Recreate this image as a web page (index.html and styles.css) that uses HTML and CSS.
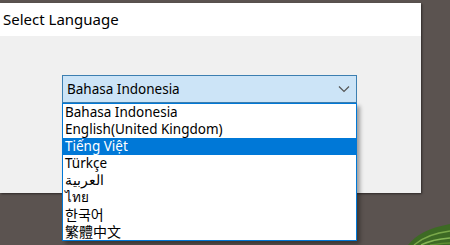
FILE: index.html
```html
<!DOCTYPE html>
<html lang="en">
<head>
    <meta charset="UTF-8">
    <meta name="viewport" content="width=device-width, initial-scale=1.0">
    <title>Select Language</title>
    <link rel="stylesheet" href="styles.css">
</head>
<body>

<div class="desktop">
    <div class="dialog">
        <div class="title-bar">Select Language</div>

        <div class="dialog-body">
            <!-- Language combo box, opened -->
            <div class="combo">
                <div class="combo-value">
                    <span>Bahasa Indonesia</span>
                    <svg class="chevron" width="12" height="8" viewBox="0 0 12 8">
                        <path d="M1 1.5 L6 6.5 L11 1.5" fill="none" stroke="#555" stroke-width="1.2"/>
                    </svg>
                </div>
                <ul class="combo-list">
                    <li>Bahasa Indonesia</li>
                    <li>English(United Kingdom)</li>
                    <li class="selected">Tiếng Việt</li>
                    <li>Türkçe</li>
                    <li lang="ar">العربية</li>
                    <li lang="th">ไทย</li>
                    <li lang="ko" class="cjk-kr">한국어</li>
                    <li lang="zh-Hant" class="cjk-tc">繁體中文</li>
                </ul>
            </div>
        </div>
    </div>

    <!-- plant in the corner of the wallpaper -->
    <svg class="plant" width="46" height="24" viewBox="0 0 46 24">
        <path d="M4 24 C12 14 24 7 46 3 L46 24 Z" fill="#3d6a24"/>
        <path d="M10 24 C18 17 30 12 46 10" fill="none" stroke="#7aa84a" stroke-width="1.4"/>
        <path d="M17 24 C25 20 35 18 46 17" fill="none" stroke="#86b556" stroke-width="1.4"/>
        <path d="M26 24 C33 23 40 22 46 22" fill="none" stroke="#5f8f34" stroke-width="1.4"/>
    </svg>
</div>

</body>
</html>
```

FILE: styles.css
```css
body { margin: 0; background-color: #5b5350; font-family: "Noto Sans", "Open Sans", sans-serif; overflow: hidden; }
.desktop { position: relative; width: 450px; height: 245px; padding-top: 3px; box-sizing: border-box; }
.dialog { width: 421px; height: 190px; background-color: #f0f0f0; box-shadow: 1px 1px 2px rgba(0, 0, 0, 0.5); }
.title-bar { height: 33px; background-color: white; color: #000; font-size: 15px; line-height: 33px; padding-left: 3px; }
.dialog-body { padding: 39px 0 0 62px; }
.combo { position: relative; width: 295px; font-size: 13.5px; color: #000; }
.combo-value { height: 26px; border: 1px solid #3c7fb1; background-color: #cce4f7; display: flex; align-items: center; justify-content: space-between; padding: 0 6px 0 4px; }
.chevron { display: block; }
.combo-list { position: absolute; top: 28px; left: 0; width: 293px; margin: 0; padding: 0; list-style: none; background-color: white; border: 1px solid #0078d7; box-shadow: 3px 3px 4px rgba(0, 0, 0, 0.35); }
.combo-list li { height: 17px; line-height: 17px; padding-left: 2px; white-space: nowrap; }
.combo-list li.selected { background-color: #0078d7; color: white; }
.cjk-kr { font-family: "Noto Sans CJK KR", sans-serif; font-size: 14px; }
.cjk-tc { font-family: "Noto Sans CJK TC", sans-serif; font-size: 14px; }
.plant { position: absolute; right: 0; bottom: 0; }
```
